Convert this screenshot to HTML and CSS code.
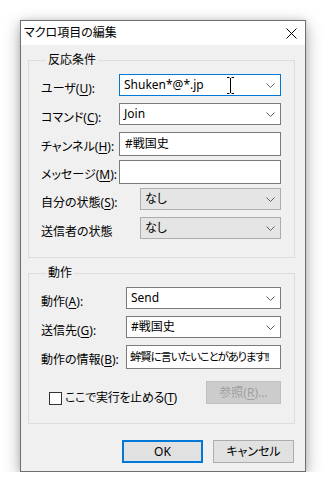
FILE: index.html
```html
<!DOCTYPE html>
<html lang="ja">
<head>
  <meta charset="UTF-8">
  <title>マクロ項目の編集</title>
  <link rel="stylesheet" href="styles.css">
</head>
<body>
  <div class="dialog">
    <div class="titlebar">
      <span class="title">マクロ項目の編集</span>
      <svg class="close" width="11" height="11" viewBox="0 0 11 11"><path d="M0.5 0.5 L10.5 10.5 M10.5 0.5 L0.5 10.5" stroke="#000" stroke-width="1" fill="none"/></svg>
    </div>
    <div class="content">
      <fieldset class="group">
        <legend>反応条件</legend>
        <div class="row">
          <label class="lbl w1">ユーザ(<u>U</u>):</label>
          <div class="combo focus">
            <span class="val">Shuken*@*.jp</span>
            <svg class="ibeam" width="7" height="17" viewBox="0 0 7 17"><path d="M0 0.5 H2.5 M4.5 0.5 H7 M3.5 1 V16 M0 16.5 H2.5 M4.5 16.5 H7" stroke="#000" stroke-width="1" fill="none"/></svg>
            <svg class="chev" width="9" height="5" viewBox="0 0 9 5"><path d="M0.5 0.5 L4.5 4.5 L8.5 0.5" stroke="#606060" fill="none"/></svg>
          </div>
        </div>
        <div class="row r2">
          <label class="lbl w1">コマンド(<u>C</u>):</label>
          <div class="combo">
            <span class="val">Join</span>
            <svg class="chev" width="9" height="5" viewBox="0 0 9 5"><path d="M0.5 0.5 L4.5 4.5 L8.5 0.5" stroke="#606060" fill="none"/></svg>
          </div>
        </div>
        <div class="row r2">
          <label class="lbl w1">チャンネル(<u>H</u>):</label>
          <div class="textbox"><span class="val">#戦国史</span></div>
        </div>
        <div class="row r3">
          <label class="lbl w1">メッセージ(<u>M</u>):</label>
          <div class="textbox"></div>
        </div>
        <div class="row r3">
          <label class="lbl w2">自分の状態(<u>S</u>):</label>
          <div class="combo list">
            <span class="val">なし</span>
            <svg class="chev" width="9" height="5" viewBox="0 0 9 5"><path d="M0.5 0.5 L4.5 4.5 L8.5 0.5" stroke="#606060" fill="none"/></svg>
          </div>
        </div>
        <div class="row r2">
          <label class="lbl w2">送信者の状態</label>
          <div class="combo list">
            <span class="val">なし</span>
            <svg class="chev" width="9" height="5" viewBox="0 0 9 5"><path d="M0.5 0.5 L4.5 4.5 L8.5 0.5" stroke="#606060" fill="none"/></svg>
          </div>
        </div>
      </fieldset>

      <fieldset class="group g2">
        <legend>動作</legend>
        <div class="row">
          <label class="lbl w3">動作(<u>A</u>):</label>
          <div class="combo">
            <span class="val">Send</span>
            <svg class="chev" width="9" height="5" viewBox="0 0 9 5"><path d="M0.5 0.5 L4.5 4.5 L8.5 0.5" stroke="#606060" fill="none"/></svg>
          </div>
        </div>
        <div class="row r2">
          <label class="lbl w3">送信先(<u>G</u>):</label>
          <div class="combo">
            <span class="val">#戦国史</span>
            <svg class="chev" width="9" height="5" viewBox="0 0 9 5"><path d="M0.5 0.5 L4.5 4.5 L8.5 0.5" stroke="#606060" fill="none"/></svg>
          </div>
        </div>
        <div class="row r2">
          <label class="lbl w3">動作の情報(<u>B</u>):</label>
          <div class="textbox tb-tight"><span class="val tight">蛑賢に言いたいことがあります!!</span></div>
        </div>
        <div class="row r4">
          <label class="check"><span class="box"></span>ここで実行を止める(<u>T</u>)</label>
          <button class="btn disabled" type="button">参照(<u>R</u>)...</button>
        </div>
      </fieldset>

      <div class="buttons">
        <button class="btn ok" type="button">OK</button>
        <button class="btn" type="button">キャンセル</button>
      </div>
    </div>
  </div>
</body>
</html>
```

FILE: styles.css
```css
body { margin: 0; padding: 20px 0 0 20px; background: #fff; font-family: "Noto Sans", "Noto Sans CJK JP", sans-serif; font-size: 12px; line-height: 16px; color: #000; font-feature-settings: "palt"; }
.dialog { width: 286px; box-sizing: border-box; border: 1px solid #6f6f6f; background: #f0f0f0; box-shadow: 0 5px 16px rgba(0,0,0,0.32), 0 0 6px rgba(0,0,0,0.12); }
.titlebar { height: 24px; background: #fff; display: flex; align-items: center; justify-content: space-between; padding: 0 8px 0 3px; }
.title { line-height: 16px; }
.content { padding: 7px 10px 8px 7px; }
.group { margin: 0; padding: 6px 13px 17px 12px; border: 1px solid #dcdcdc; min-width: 0; }
.group legend { padding: 0 2px; margin-left: 5px; line-height: 16px; }
.g2 { margin-top: 7px; }
.row { display: flex; align-items: flex-start; }
.r2 { margin-top: 6px; }
.r3 { margin-top: 4px; }
.r4 { margin-top: 12px; justify-content: space-between; }
.lbl { margin-top: 7px; white-space: nowrap; }
.lbl u, .check u, .btn u { text-decoration-thickness: 1px; text-underline-offset: 2px; }
.w1 { width: 78px; }
.w2 { width: 99px; }
.w3 { width: 85px; }
.combo, .textbox { flex: 1; position: relative; box-sizing: border-box; height: 22px; border: 1px solid #7a7a7a; background: #fff; display: flex; align-items: center; padding: 0 5px 0 4px; overflow: hidden; }
.textbox { height: 24px; padding-left: 5px; }
.tb-tight { padding: 0 1px 0 3px; }
.combo.focus { border-color: #0078d7; }
.combo.list { background: #e5e5e5; border-color: #adadad; }
.val { flex: 1; white-space: nowrap; }
.tight { font-size: 11.5px; letter-spacing: -1.2px; }
.chev { flex: none; }
.ibeam { position: absolute; left: 107px; top: 2px; }
.check { display: flex; align-items: center; margin: 9px 0 0 8px; letter-spacing: -0.3px; }
.box { width: 11px; height: 11px; border: 1px solid #333; background: #fff; margin-right: 3px; }
.btn { font: inherit; font-feature-settings: "palt"; box-sizing: border-box; height: 23px; padding: 0; border: 1px solid #adadad; background: #e1e1e1; color: #000; }
.btn.disabled { width: 75px; background: #cccccc; border-color: #bfbfbf; color: #a0a0a0; }
.buttons { display: flex; justify-content: flex-end; gap: 10px; margin-top: 16px; padding-right: 1px; }
.buttons .btn { width: 81px; }
.btn.ok { border: 2px solid #0078d7; }
```
